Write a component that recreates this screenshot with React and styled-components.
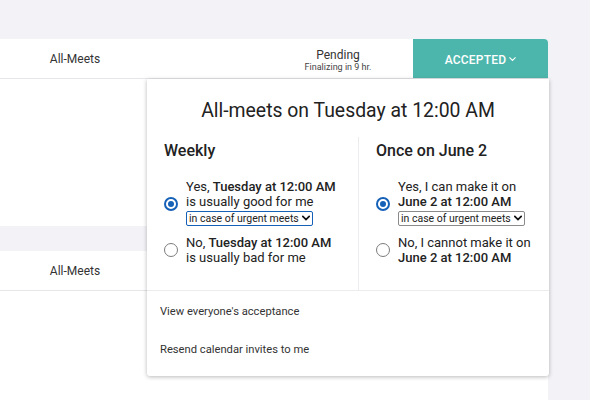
import React from "react";
import styled, { createGlobalStyle } from "styled-components";

const GlobalStyle = createGlobalStyle`
  html, body {
    margin: 0;
    padding: 0;
    background: #f2f2f7;
    font-family: Roboto, "Liberation Sans", Arial, sans-serif;
    color: #222;
  }
`;

const Page = styled.div`
  width: 590px;
  height: 400px;
  overflow: hidden;
  padding-top: 39px;
  box-sizing: border-box;
  display: flex;
  flex-direction: column;
  gap: 25px;
`;

const Card = styled.div`
  position: relative;
  width: 548px;
  height: ${(p) => p.height}px;
  background: #fff;
  border-top-right-radius: 4px;
  flex-shrink: 0;
`;

const HeaderRow = styled.div`
  height: 39px;
  display: grid;
  grid-template-columns: 150px 1fr 150px 135px;
  border-bottom: 1px solid #e6e6ea;
  font-size: 12px;
  color: #333;
`;

const HeaderCell = styled.div`
  display: flex;
  flex-direction: column;
  align-items: center;
  justify-content: center;
  padding-top: ${(p) => (p.stacked ? "3px" : "0")};
`;

const Sub = styled.div`
  font-size: 9px;
  color: #444;
`;

const AcceptedButton = styled.div`
  background: #4db6ac;
  color: #fff;
  font-weight: 500;
  font-size: 12px;
  letter-spacing: 0.2px;
  display: flex;
  align-items: center;
  justify-content: center;
  gap: 3px;
  border-top-right-radius: 4px;
  padding-top: 2px;
`;

const Popup = styled.div`
  position: absolute;
  left: 147px;
  top: 40px;
  width: 402px;
  height: 297px;
  background: #fff;
  box-shadow: 0 1px 4px rgba(0, 0, 0, 0.28);
  border-radius: 0 0 3px 3px;
  z-index: 2;
  display: flex;
  flex-direction: column;
`;

const Title = styled.h2`
  margin: 0;
  padding-top: 20px;
  text-align: center;
  font-size: 19.4px;
  font-weight: 400;
  color: #222;
  line-height: 24px;
`;

const Columns = styled.div`
  display: grid;
  grid-template-columns: 211px 1fr;
  margin-top: 14px;
  border-bottom: 1px solid #ececef;
`;

const Column = styled.div`
  padding: 4px 0 16px ${(p) => p.pad}px;
  border-left: ${(p) => (p.divided ? "1px solid #ececef" : "none")};
`;

const ColTitle = styled.h3`
  margin: 0 0 18px;
  font-size: 16px;
  font-weight: 500;
  line-height: 20px;
  color: #222;
`;

const Option = styled.label`
  display: flex;
  align-items: center;
  gap: 8px;
  margin-bottom: 9px;
`;

const Radio = styled.span`
  width: 14px;
  height: 14px;
  border-radius: 50%;
  box-sizing: border-box;
  flex-shrink: 0;
  border: ${(p) => (p.checked ? "2px solid #1561b8" : "1.5px solid #7b7b7b")};
  display: flex;
  align-items: center;
  justify-content: center;
  margin-top: ${(p) => (p.checked ? "2px" : "0")};
  &::after {
    content: "";
    width: 6px;
    height: 6px;
    border-radius: 50%;
    background: ${(p) => (p.checked ? "#1561b8" : "transparent")};
  }
`;

const OptionText = styled.div`
  font-size: 13px;
  line-height: 15px;
  color: #222;
  b {
    font-weight: 500;
  }
`;

const SelectWrap = styled.div`
  position: relative;
  display: inline-block;
  margin-top: 1px;
`;

const Select = styled.select`
  appearance: none;
  font-family: inherit;
  font-size: 10.5px;
  color: #222;
  background: #fff;
  height: 15px;
  line-height: 13px;
  padding: 0 13px 0 2px;
  border-radius: 2px;
  border: ${(p) => (p.focused ? "1.5px solid #1561b8" : "1px solid #8a8a8a")};
  outline: none;
`;

const Chevron = styled.svg`
  position: absolute;
  right: 3px;
  top: 5px;
  pointer-events: none;
`;

const Menu = styled.div`
  display: flex;
  flex-direction: column;
  padding-top: 1px;
`;

const MenuItem = styled.div`
  font-size: 11.2px;
  color: #333;
  padding: 0 13px;
  height: 38px;
  display: flex;
  align-items: center;
`;

const ChevronDown = ({ size = 7, color = "#222", stroke = 1.6 }) => (
  <svg width={size} height={size * 0.6} viewBox="0 0 10 6">
    <path d="M1 1l4 4 4-4" fill="none" stroke={color} strokeWidth={stroke} strokeLinecap="round" />
  </svg>
);

const UrgentSelect = ({ focused }) => (
  <SelectWrap>
    <Select focused={focused} defaultValue="urgent">
      <option value="urgent">in case of urgent meets</option>
    </Select>
    <Chevron width="8" height="6" viewBox="0 0 10 6">
      <path d="M1 1l4 4 4-4" fill="none" stroke="#111" strokeWidth="2.2" strokeLinecap="round" />
    </Chevron>
  </SelectWrap>
);

export default function App() {
  return (
    <>
      <GlobalStyle />
      <Page>
        <Card height={187}>
          <HeaderRow>
            <HeaderCell>All-Meets</HeaderCell>
            <div />
            <HeaderCell stacked>
              Pending
              <Sub>Finalizing in 9 hr.</Sub>
            </HeaderCell>
            <AcceptedButton>
              ACCEPTED
              <ChevronDown size={7} color="#fff" stroke={1.5} />
            </AcceptedButton>
          </HeaderRow>
          <Popup>
            <Title>All-meets on Tuesday at 12:00 AM</Title>
            <Columns>
              <Column pad={17}>
                <ColTitle>Weekly</ColTitle>
                <Option>
                  <Radio checked />
                  <OptionText>
                    Yes, <b>Tuesday at 12:00 AM</b>
                    <br />
                    is usually good for me
                    <br />
                    <UrgentSelect focused />
                  </OptionText>
                </Option>
                <Option>
                  <Radio />
                  <OptionText>
                    No, <b>Tuesday at 12:00 AM</b>
                    <br />
                    is usually bad for me
                  </OptionText>
                </Option>
              </Column>
              <Column pad={17} divided>
                <ColTitle>Once on June 2</ColTitle>
                <Option>
                  <Radio checked />
                  <OptionText>
                    Yes, I can make it on
                    <br />
                    <b>June 2 at 12:00 AM</b>
                    <br />
                    <UrgentSelect />
                  </OptionText>
                </Option>
                <Option>
                  <Radio />
                  <OptionText>
                    No, I cannot make it on
                    <br />
                    <b>June 2 at 12:00 AM</b>
                  </OptionText>
                </Option>
              </Column>
            </Columns>
            <Menu>
              <MenuItem>View everyone's acceptance</MenuItem>
              <MenuItem>Resend calendar invites to me</MenuItem>
            </Menu>
          </Popup>
        </Card>
        <Card height={200}>
          <HeaderRow>
            <HeaderCell>All-Meets</HeaderCell>
          </HeaderRow>
        </Card>
      </Page>
    </>
  );
}
